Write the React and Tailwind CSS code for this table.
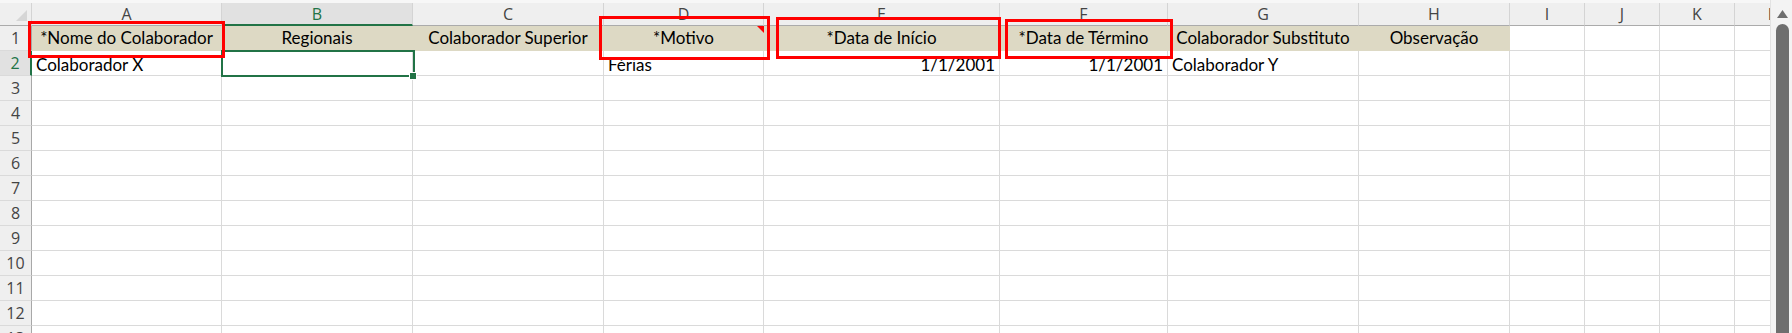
import React from "react";

// Column layout of the sheet (width includes the 1px gridline on the right)
const columns = [
  { id: "A", width: "w-[190px]" },
  { id: "B", width: "w-[191px]" },
  { id: "C", width: "w-[191px]" },
  { id: "D", width: "w-[160px]" },
  { id: "E", width: "w-[236px]" },
  { id: "F", width: "w-[168px]" },
  { id: "G", width: "w-[191px]" },
  { id: "H", width: "w-[151px]" },
  { id: "I", width: "w-[75px]" },
  { id: "J", width: "w-[75px]" },
  { id: "K", width: "w-[75px]" },
  { id: "L", width: "w-[75px]" },
];

const headerTitles = {
  A: "*Nome do Colaborador",
  B: "Regionais",
  C: "Colaborador Superior",
  D: "*Motivo",
  E: "*Data de Início",
  F: "*Data de Término",
  G: "Colaborador Substituto",
  H: "Observação",
};

const firstRecord = {
  A: { text: "Colaborador X" },
  D: { text: "Férias" },
  E: { text: "1/1/2001", right: true },
  F: { text: "1/1/2001", right: true },
  G: { text: "Colaborador Y" },
};

const rowNumbers = [1, 2, 3, 4, 5, 6, 7, 8, 9, 10, 11, 12, 13];

function ColumnHeaderRow() {
  return (
    <div className="flex h-[26px] pt-[3px] bg-[#f7f7f7]">
      <div className="relative w-[32px] h-[23px] shrink-0 bg-[#efefef] border-r border-b border-r-[#d4d4d4] border-b-[#ababab]">
        <svg className="absolute right-[4px] bottom-[4px]" width="11" height="11" viewBox="0 0 11 11">
          <polygon points="11,0 11,11 0,11" fill="#d6d6d6" />
        </svg>
      </div>
      {columns.map((c) => {
        const active = c.id === "B";
        return (
          <div
            key={c.id}
            className={
              active
                ? `${c.width} h-[23px] shrink-0 flex items-center justify-center bg-[#e1e1e1] border-r border-r-[#d4d4d4] border-b-2 border-b-[#217346] text-[#217346] font-['Open_Sans'] text-[16px] leading-none`
                : `${c.width} h-[23px] shrink-0 flex items-center justify-center bg-[#efefef] border-r border-r-[#d4d4d4] border-b border-b-[#ababab] text-[#444444] font-['Open_Sans'] text-[16px] leading-none`
            }
          >
            {c.id}
          </div>
        );
      })}
    </div>
  );
}

function RowHeader({ n }) {
  const active = n === 2;
  return (
    <div
      className={
        active
          ? "w-[32px] h-[25px] shrink-0 flex items-end justify-center pb-[2px] bg-[#e1e1e1] border-b border-b-[#dadada] border-r-2 border-r-[#217346] text-[#217346] font-['Open_Sans'] text-[16px] leading-[20px]"
          : "w-[32px] h-[25px] shrink-0 flex items-end justify-center pb-[2px] bg-[#efefef] border-b border-b-[#dadada] border-r border-r-[#a8a8a8] text-[#444444] font-['Open_Sans'] text-[16px] leading-[20px]"
      }
    >
      {n}
    </div>
  );
}

function TitleRow() {
  return (
    <div className="flex h-[25px]">
      <RowHeader n={1} />
      {columns.map((c) => {
        const title = headerTitles[c.id];
        if (!title) {
          return (
            <div
              key={c.id}
              className={`${c.width} h-[25px] shrink-0 border-r border-b border-[#dadada] bg-white`}
            />
          );
        }
        return (
          <div
            key={c.id}
            className={`${c.width} relative h-[25px] shrink-0 flex items-end justify-center pb-[2px] bg-[#ddd9c4] border-r border-b border-[#ddd9c4] text-black text-[17px] leading-[20px] whitespace-nowrap`}
          >
            {title}
            {c.id === "D" && (
              <svg className="absolute -right-px top-0" width="7" height="7" viewBox="0 0 7 7">
                <polygon points="0,0 7,0 7,7" fill="#ff0000" />
              </svg>
            )}
          </div>
        );
      })}
    </div>
  );
}

function DataRow({ n, values }) {
  return (
    <div className="flex h-[25px]">
      <RowHeader n={n} />
      {columns.map((c) => {
        const v = values ? values[c.id] : null;
        return (
          <div
            key={c.id}
            className={
              v && v.right
                ? `${c.width} h-[25px] shrink-0 flex items-end justify-end px-[4px] border-r border-b border-[#dadada] text-black text-[17px] leading-[20px] whitespace-nowrap`
                : `${c.width} h-[25px] shrink-0 flex items-end justify-start px-[4px] border-r border-b border-[#dadada] text-black text-[17px] leading-[20px] whitespace-nowrap`
            }
          >
            {v ? v.text : ""}
          </div>
        );
      })}
    </div>
  );
}

function VerticalScrollbar() {
  return (
    <div className="w-[22px] h-full shrink-0 bg-[#f3f3f3] border-l border-[#e2e2e2] flex flex-col items-center pt-[10px]">
      <svg width="11" height="8" viewBox="0 0 11 8" className="ml-[2px]">
        <polygon points="5.5,0 11,8 0,8" fill="#6e6e6e" />
      </svg>
      <div className="mt-[6px] ml-[2px] w-[13px] flex-1 rounded-t-[7px] bg-[#6e6e6e]" />
    </div>
  );
}

export default function App() {
  return (
    <div className="flex w-[1792px] h-[333px] overflow-hidden bg-white font-['Lato',sans-serif]">
      <div className="relative w-[1770px] h-full shrink-0 overflow-hidden">
        <ColumnHeaderRow />
        <TitleRow />
        {rowNumbers.slice(1).map((n) => (
          <DataRow key={n} n={n} values={n === 2 ? firstRecord : null} />
        ))}

        {/* active cell B2 with fill handle */}
        <div className="absolute left-[221px] top-[50px] w-[194px] h-[27px] border-2 border-[#217346]" />
        <div className="absolute left-[409px] top-[72px] w-[8px] h-[8px] bg-[#217346] border border-white" />

        {/* highlighted required fields */}
        <div className="absolute left-[28px] top-[21px] w-[197px] h-[37px] border-[3px] border-[#ff0000]" />
        <div className="absolute left-[599px] top-[16px] w-[171px] h-[44px] border-[3px] border-[#ff0000]" />
        <div className="absolute left-[776px] top-[17px] w-[225px] h-[42px] border-[3px] border-[#ff0000]" />
        <div className="absolute left-[1005px] top-[19px] w-[168px] h-[40px] border-[3px] border-[#ff0000]" />
      </div>
      <VerticalScrollbar />
    </div>
  );
}
